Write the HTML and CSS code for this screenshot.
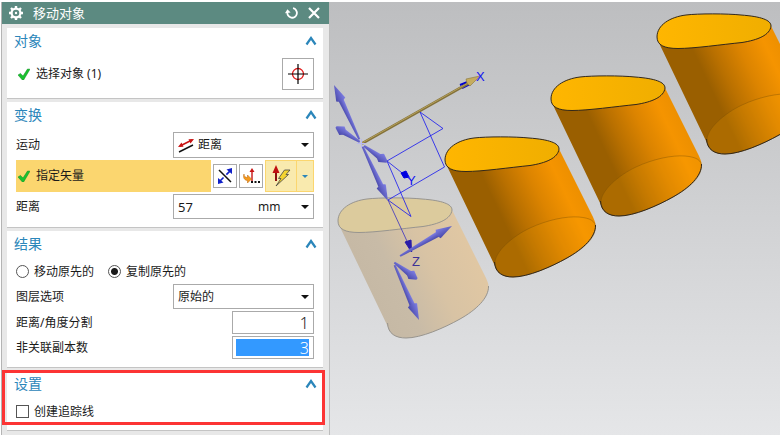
FILE: index.html
```html
<!DOCTYPE html>
<html lang="zh-CN">
<head>
    <meta charset="UTF-8">
    <meta name="viewport" content="width=device-width, initial-scale=1.0">
    <title>移动对象</title>
    <link rel="stylesheet" href="styles.css">
</head>
<body>
    <div class="app">
        <form class="dialog">
            <header class="dialog-header">
                <svg class="gear" width="16" height="16" viewBox="0 0 16 16">
                    <circle cx="8" cy="8" r="4.400" fill="none" stroke="#fff" stroke-width="2.200"/>
                    <path d="M8 1v3M8 12v3M1 8h3M12 8h3M3 3l2 2M11 11L13 13M13 3l-2 2M5 11L3 13" stroke="#fff" stroke-width="2.400"/>
                    <circle cx="8" cy="8" r="1.200" fill="#fff"/>
                </svg>
                <h1>移动对象</h1>
                <button type="button" class="header-button" aria-label="重置">
                    <svg width="14" height="14" viewBox="0 0 14 14">
                        <path d="M8 2.200A4.800 4.800 0 1 1 2.400 6" fill="none" stroke="#fff" stroke-width="1.800"/>
                        <path d="M0 7.200L2.400 3.200L5.600 6.600z" fill="#fff"/>
                    </svg>
                </button>
                <button type="button" class="header-button" aria-label="关闭">
                    <svg width="12" height="12" viewBox="0 0 12 12">
                        <path d="M1 1l10 10M11 1L1 11" stroke="#fff" stroke-width="2.200"/>
                    </svg>
                </button>
            </header>

            <section class="group">
                <div class="group-title">
                    <h2>对象</h2>
                    <button type="button" class="collapse" aria-label="折叠对象">
                        <svg width="12" height="10" viewBox="0 0 12 10"><path d="M1.500 8.500L6 2l4.500 6.500" fill="none" stroke="#2b86ba" stroke-width="2.200"/></svg>
                    </button>
                </div>
                <div class="group-body">
                    <div class="row tall">
                        <span class="step">
                            <svg width="12" height="12" viewBox="0 0 12 12"><path d="M0 7l2.500-1.600L5 8L9.500 1L12 1.200L5.600 12H4.400z" fill="#19c22f" stroke="#0c8a1e" stroke-width=".5"/></svg>
                            选择对象 (1)
                        </span>
                        <button type="button" class="tool large" aria-label="选择对象">
                            <svg width="20" height="20" viewBox="0 0 20 20">
                                <circle cx="10" cy="10" r="5.500" fill="none" stroke="#e01818" stroke-width="1.300"/>
                                <path d="M10 0v20M0 10h20" stroke="#000" stroke-width="1.200"/>
                            </svg>
                        </button>
                    </div>
                </div>
            </section>

            <section class="group">
                <div class="group-title">
                    <h2>变换</h2>
                    <button type="button" class="collapse" aria-label="折叠变换">
                        <svg width="12" height="10" viewBox="0 0 12 10"><path d="M1.500 8.500L6 2l4.500 6.500" fill="none" stroke="#2b86ba" stroke-width="2.200"/></svg>
                    </button>
                </div>
                <div class="group-body">
                    <div class="row motion-row">
                        <label for="motion">运动</label>
                        <div class="field motion-field">
                            <svg width="16" height="16" viewBox="0 0 16 16">
                                <path d="M2 9L14 3" stroke="#c81414" stroke-width="1.600"/>
                                <path d="M0 10l3.500-4.500l2 4.300zM16 2l-3.500 4.500L10.500 2.200z" fill="#c81414"/>
                                <path d="M1 15L15 8" stroke="#111" stroke-width="1.500"/>
                            </svg>
                            <select id="motion"><option>距离</option></select>
                            <svg class="caret" width="8" height="4" viewBox="0 0 8 4"><path d="M0 0h8L4 4z"/></svg>
                        </div>
                    </div>
                    <div class="row tall vector-row">
                        <span class="step active">
                            <svg width="12" height="12" viewBox="0 0 12 12"><path d="M0 7l2.500-1.600L5 8L9.500 1L12 1.200L5.600 12H4.400z" fill="#19c22f" stroke="#0c8a1e" stroke-width=".5"/></svg>
                            指定矢量
                        </span>
                        <button type="button" class="tool" aria-label="反向">
                            <svg width="16" height="16" viewBox="0 0 16 16">
                                <path d="M2 2l12 12" stroke="#111" stroke-width="1.500"/>
                                <path d="M3 13L13 3" stroke="#1020c8" stroke-width="1.600" stroke-dasharray="5 4"/>
                                <path d="M15 0v6L9.500 1.500zM1 16v-6l5.500 4.500z" fill="#1020c8"/>
                            </svg>
                        </button>
                        <button type="button" class="tool" aria-label="矢量对话框">
                            <svg width="18" height="18" viewBox="0 0 18 18">
                                <path d="M10 14V4" stroke="#c81414" stroke-width="1.400"/>
                                <path d="M10 1l2.500 4h-5z" fill="#c81414"/>
                                <path d="M2 7c0 2.500 1.500 3.500 3.500 3.500V8l4 4-4 4v-2.500C3 13.500 .5 11 2 7z" fill="#f59a1c" stroke="#b86208" stroke-width=".5"/>
                                <path d="M9 14h2v2H9zM12.500 14h2v2h-2zM16 14h2v2h-2z" fill="#111"/>
                            </svg>
                        </button>
                        <div class="split-tool">
                            <button type="button" class="split-main" aria-label="自动判断的矢量">
                                <svg width="20" height="24" viewBox="0 0 20 24">
                                    <path d="M5 17V8" stroke="#8c1010" stroke-width="2"/>
                                    <path d="M5 1l3.500 8h-7z" fill="#c01010"/>
                                    <path d="M13.500 6H19l-4 4.500h2.500L5 22l5-7.500H7.500z" fill="#f4d430" stroke="#444" stroke-width=".8"/>
                                </svg>
                            </button>
                            <button type="button" class="split-more" aria-label="更多矢量类型">
                                <svg width="6" height="3" viewBox="0 0 6 3"><path d="M0 0h6L3 3z" fill="#2b86ba"/></svg>
                            </button>
                        </div>
                    </div>
                    <div class="row">
                        <label for="distance">距离</label>
                        <div class="field">
                            <input id="distance" class="distance" type="text" value="57">
                            <select class="unit" aria-label="单位"><option>mm</option></select>
                            <svg class="caret" width="8" height="4" viewBox="0 0 8 4"><path d="M0 0h8L4 4z"/></svg>
                        </div>
                    </div>
                </div>
            </section>

            <section class="group">
                <div class="group-title">
                    <h2>结果</h2>
                    <button type="button" class="collapse" aria-label="折叠结果">
                        <svg width="12" height="10" viewBox="0 0 12 10"><path d="M1.500 8.500L6 2l4.500 6.500" fill="none" stroke="#2b86ba" stroke-width="2.200"/></svg>
                    </button>
                </div>
                <div class="group-body">
                    <div class="row choices">
                        <label><input type="radio" name="result">移动原先的</label>
                        <label><input type="radio" name="result" checked>复制原先的</label>
                    </div>
                    <div class="row">
                        <label for="layer">图层选项</label>
                        <div class="field">
                            <select id="layer"><option>原始的</option></select>
                            <svg class="caret" width="8" height="4" viewBox="0 0 8 4"><path d="M0 0h8L4 4z"/></svg>
                        </div>
                    </div>
                    <div class="row short">
                        <label for="divisions">距离/角度分割</label>
                        <input id="divisions" class="number" type="text" value="1">
                    </div>
                    <div class="row short">
                        <label for="copies">非关联副本数</label>
                        <input id="copies" class="number selected" type="text" value="3">
                    </div>
                </div>
            </section>

            <section class="group highlighted">
                <div class="group-title">
                    <h2>设置</h2>
                    <button type="button" class="collapse" aria-label="折叠设置">
                        <svg width="12" height="10" viewBox="0 0 12 10"><path d="M1.500 8.500L6 2l4.500 6.500" fill="none" stroke="#2b86ba" stroke-width="2.200"/></svg>
                    </button>
                </div>
                <div class="group-body">
                    <div class="row choices">
                        <label><input type="checkbox">创建追踪线</label>
                    </div>
                </div>
            </section>
        </form>

        <main class="viewport">
            <svg class="scene" viewBox="330 2 450 433" preserveAspectRatio="xMinYMin slice">
                <defs>
                    <linearGradient id="side" gradientUnits="userSpaceOnUse" x1="450" y1="172" x2="547" y2="126">
                        <stop offset="0" stop-color="#9a5f00"/>
                        <stop offset=".25" stop-color="#9a5f00"/>
                        <stop offset=".42" stop-color="#b97000"/>
                        <stop offset=".65" stop-color="#dc8400"/>
                        <stop offset=".88" stop-color="#f59400"/>
                        <stop offset="1" stop-color="#ee9000"/>
                    </linearGradient>
                    <linearGradient id="ghostSide" gradientUnits="userSpaceOnUse" x1="450" y1="172" x2="547" y2="126">
                        <stop offset="0" stop-color="#c6b9a5"/>
                        <stop offset=".25" stop-color="#c8bba7"/>
                        <stop offset=".6" stop-color="#d8c3a4"/>
                        <stop offset="1" stop-color="#e0c7a3"/>
                    </linearGradient>
                    <linearGradient id="cap">
                        <stop offset="0" stop-color="#ffb600"/>
                        <stop offset="1" stop-color="#f0ae00"/>
                    </linearGradient>
                    <path id="capShape" d="M445 161C445 149 458 141 474 139C486 137.500 515 137.500 529 139C549 140.500 559 144 559 150C558 159 546 164 530 166.500C510 168.500 482 172.500 466 172.500C452 172.500 445 169 445 161z"/>
                    <path id="bodyShape" d="M447 167L495 267C497 275 504 278 513 278C528 278 551 268 567 259C583 250 596 238 595.500 226C595.500 223 594 221 593 218L559 150C540 168 490 172 447 167z"/>
                    <g id="solid">
                        <use href="#bodyShape" fill="url(#side)"/>
                        <path d="M495 265C494 253 513 237 530 229C547 221 566 217 579 218C590 219 596 222 595.500 229C594 241 583 250 567 259C551 268 528 278 513 278C504 278 497 275 495 265z" fill="#ffa400" fill-opacity=".18" stroke="#7d5000" stroke-opacity=".5" stroke-width=".8"/>
                        <path d="M494.500 263C495 274 503 278 513 278C528 278 551 268 567 259C583 250 596 238 595.500 226" fill="none" stroke="#33281a"/>
                        <use href="#capShape" fill="url(#cap)" stroke="#33281a"/>
                    </g>
                    <linearGradient id="steel" x1="0" y1="0" x2="0" y2="1">
                        <stop offset="0" stop-color="#8080e4"/>
                        <stop offset="1" stop-color="#4848aa"/>
                    </linearGradient>
                    <!-- arrows point along +x with the tip at 0,0 -->
                    <g id="longArrow" fill="url(#steel)">
                        <path d="M-60-1L-15-2.800V2.800L-60 1z"/>
                        <path d="M0 0L-16-5Q-19 0-16 5z"/>
                    </g>
                    <g id="shortArrow" fill="url(#steel)">
                        <path d="M-28-1L-9-3V3L-28 1z"/>
                        <path d="M0-1L-7-5Q-12-2-10 3L-7 5L0 1z"/>
                    </g>
                </defs>

                <use href="#solid" x="212" y="-124"/>
                <use href="#solid" x="106" y="-62"/>
                <use href="#solid" y="-1"/>

                <g transform="translate(-107 60)">
                    <use href="#bodyShape" fill="url(#ghostSide)"/>
                    <path d="M494.500 263C495 274 503 278 513 278C528 278 551 268 567 259C583 250 596 238 595.500 226" fill="none" stroke="#98958f"/>
                    <use href="#capShape" fill="#dccb9d" stroke="#98958f"/>
                </g>

                <!-- sketch planes and axes -->
                <g fill="none" stroke="#1414f0" stroke-width=".8">
                    <path d="M387 161L443 128.500L420 112L444.500 167L388 200L411 216.500L387 161L411 180"/>
                    <path d="M388 200L412 252" stroke="#3a30c0"/>
                </g>
                <path d="M401 173l5-2 3 6-5 1z" fill="#0000e0" stroke="#0000e0"/>
                <path d="M405 242l6-2 .5 12z" fill="#2a1ca8" stroke="#2a1ca8"/>
                <path d="M460 85l10-4M462 88l8-4" stroke="#0000d0" stroke-width="2"/>

                <path d="M362 143.500L469 83" stroke="#84723a" stroke-width="2.600"/>
                <path d="M362 143L469 82.500" stroke="#b5a05a" stroke-width="1"/>
                <path d="M480 76L466 79Q466 84 470 86z" fill="#c5ac5e" stroke="#8a7636" stroke-width=".6"/>

                <use href="#longArrow" transform="translate(334 85) rotate(65) scale(-1 1)"/>
                <use href="#shortArrow" transform="translate(336 127) rotate(32) scale(-1 1)"/>
                <use href="#shortArrow" transform="translate(387 162) rotate(35)"/>
                <use href="#longArrow" transform="translate(388 201) rotate(65)"/>
                <use href="#longArrow" transform="translate(452 226) rotate(-30)"/>
                <use href="#shortArrow" transform="translate(417 279) rotate(36)"/>
                <use href="#longArrow" transform="translate(419 320) rotate(66)"/>
                <path d="M357 143.500h9M361.500 139v9" stroke="#b8b8f0"/>

                <g class="axis-labels">
                    <text x="476" y="81">X</text>
                    <text x="407" y="185">Y</text>
                    <text x="412" y="266" fill="#3c3296">Z</text>
                </g>
            </svg>
        </main>
    </div>
</body>
</html>
```
FILE: styles.css
```css
* {
    box-sizing: border-box;
}

body {
    margin: 0;
    background-color: #fff;
    color: #1a1a1a;
    font-family: "Noto Sans", "Noto Sans CJK SC", sans-serif;
    font-size: 12px;
    line-height: 16px;
}

button,
input,
select {
    margin: 0;
    padding: 0;
    border: none;
    border-radius: 0;
    background: none;
    color: inherit;
    font: inherit;
}

button {
    display: flex;
    align-items: center;
    justify-content: center;
    cursor: pointer;
}

svg {
    display: block;
    flex: none;
}

.app {
    display: grid;
    grid-template-columns: minmax(300px, 330px) 1fr;
    min-height: 100vh;
    padding-top: 2px;
}

.dialog {
    margin-left: 1px;
    padding-bottom: 1px;
    border-left: 1px solid #b4b4b4;
    border-right: 1px solid #bdbdbd;
    background-color: #e8e8e8;
}

.dialog-header {
    display: flex;
    align-items: center;
    gap: 9px;
    height: 22px;
    margin-bottom: 4px;
    padding: 0 9px 0 6px;
    background-color: #5c8a81;
    color: #fff;
}

.dialog-header h1 {
    flex: 1;
    margin: 0;
    font-size: 13px;
    font-weight: normal;
}

.group {
    position: relative;
    margin: 0 6px 3px 5px;
    border-bottom: 1px solid #c4c4c4;
    background-color: #fff;
}

.group-title {
    display: flex;
    align-items: center;
    justify-content: space-between;
    height: 26px;
    padding: 0 6px 0 7px;
}

.group-title h2 {
    margin: 0;
    color: #2b86ba;
    font-size: 14px;
    font-weight: normal;
}

.group-body {
    display: flex;
    flex-direction: column;
    gap: 2px;
    padding: 4px 9px 8px;
}

.row {
    display: flex;
    align-items: center;
    justify-content: space-between;
    height: 25px;
}

.row.motion-row {
    height: 26px;
}

.row.tall {
    height: 32px;
}

.row.short {
    height: 23px;
}

.row.choices {
    justify-content: flex-start;
    gap: 14px;
    height: 21px;
}

.choices label {
    display: flex;
    align-items: center;
    gap: 5px;
}

.choices input {
    width: 13px;
    height: 13px;
    border: 1px solid #555;
    background-color: #fff;
    appearance: none;
}

.choices input[type="radio"] {
    border-radius: 50%;
}

.choices input[type="radio"]:checked {
    background-image: radial-gradient(circle, #1a1a1a 3px, transparent 4px);
}

.choices input[type="checkbox"]:checked {
    background-color: #2b86ba;
}

.step {
    display: flex;
    align-items: center;
    flex: 1;
    gap: 6px;
    align-self: stretch;
    padding-left: 2px;
}

.step.active {
    background-color: #fbd66f;
}

.vector-row {
    gap: 2px;
}

.tool {
    width: 24px;
    height: 24px;
    border: 1px solid #aaa;
    background-color: #fff;
}

.tool.large {
    width: 32px;
    height: 32px;
}

.split-tool {
    display: flex;
    align-self: stretch;
    width: 49px;
    border: 1px solid #fbd66f;
    background-color: #f9eaae;
}

.split-main {
    flex: 1;
}

.split-more {
    width: 17px;
    border-left: 1px solid #fbd66f;
}

.field {
    display: flex;
    align-items: center;
    align-self: stretch;
    width: 141px;
    padding: 0 4px;
    border: 1px solid #aaa;
    background-color: #fff;
}

.field select {
    flex: 1;
    min-width: 0;
    appearance: none;
}

.motion-field {
    gap: 4px;
}

.field .distance {
    width: 80px;
    font-size: 13px;
}

.caret {
    fill: #111;
    pointer-events: none;
}

.number {
    width: 82px;
    height: 23px;
    padding: 2px 4px 2px 3px;
    border: 1px solid #aaa;
    font-size: 16px;
    font-weight: 300;
    text-align: right;
}

.number.selected {
    background-color: #3399ff;
    background-clip: content-box;
    color: #fff;
}

/* red frame drawn round the settings group */
.highlighted::after {
    position: absolute;
    inset: -1px -2px 5px -5px;
    border: 3px solid #fc3434;
    content: "";
    pointer-events: none;
}

.viewport {
    position: relative;
    overflow: hidden;
    background: linear-gradient(#bdbec0, #e5e6e8);
}

/* the model fills whatever room the dialog leaves */
.scene {
    position: absolute;
    inset: 0;
    width: 100%;
    height: 100%;
}

.axis-labels {
    fill: #1414f0;
    font-family: "Liberation Sans", sans-serif;
    font-size: 13px;
}
```
